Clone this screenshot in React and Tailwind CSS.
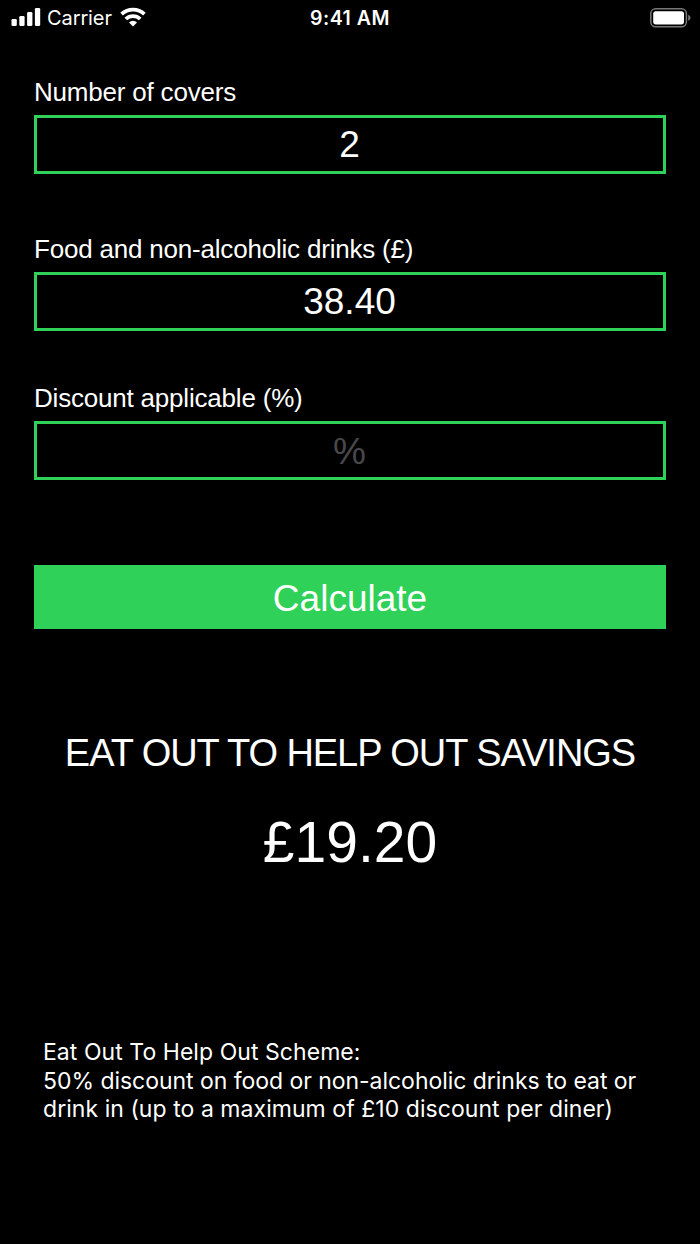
import React from 'react';

const fields = [
  { label: 'Number of covers', value: '2', spacing: 'mb-[59px]' },
  { label: 'Food and non-alcoholic drinks (£)', value: '38.40', spacing: 'mb-[51px]' },
  { label: 'Discount applicable (%)', value: '', placeholder: '%', spacing: 'mb-[85px]' },
];

function SignalIcon() {
  return (
    <svg width="30" height="20" viewBox="0 0 30 20" fill="white">
      <rect x="0.5" y="12" width="5.3" height="7" rx="1.3" />
      <rect x="8.3" y="9" width="5.3" height="10" rx="1.3" />
      <rect x="16.1" y="5" width="5.3" height="14" rx="1.3" />
      <rect x="23.9" y="1" width="5.3" height="18" rx="1.3" />
    </svg>
  );
}

function WifiIcon() {
  return (
    <svg width="26" height="20" viewBox="0 0 26 20" fill="none" stroke="white" strokeWidth="3.8">
      <path d="M1.6 7.1a16.6 16.6 0 0 1 22.8 0" />
      <path d="M5.8 12a10.4 10.4 0 0 1 14.4 0" />
      <path d="M13 19.4l-4-4a5.7 5.7 0 0 1 8 0z" fill="white" stroke="none" />
    </svg>
  );
}

function BatteryIcon() {
  return (
    <svg width="42" height="20" viewBox="0 0 42 20">
      <rect x="0.8" y="0.8" width="35.6" height="18" rx="4.8" fill="none" stroke="#777" strokeWidth="1.5" />
      <rect x="3.2" y="3.2" width="30.8" height="13.2" rx="2.6" fill="white" />
      <path d="M38.2 6.8c3 1 3 5 0 6z" fill="#777" />
    </svg>
  );
}

function StatusBar() {
  return (
    <header className="flex h-9 items-center justify-between pl-[11px] pr-[8px] font-['Inter',sans-serif]">
      <div className="flex flex-1 items-center">
        <div className="pb-[2px]"><SignalIcon /></div>
        <span className="ml-[6px] mr-[8px] text-[20px] tracking-[-0.1px]">Carrier</span>
        <div className="pb-[2px]"><WifiIcon /></div>
      </div>
      <div className="mr-[3px] pt-[2px] text-[19.5px] font-semibold tracking-[0.55px]">9:41 AM</div>
      <div className="flex flex-1 justify-end pb-[1px]">
        <BatteryIcon />
      </div>
    </header>
  );
}

export default function App() {
  return (
    <div className="h-[1244px] w-[700px] overflow-hidden bg-black font-['Liberation_Sans',sans-serif] text-white">
      <StatusBar />
      <main className="flex flex-col px-[34px] pt-[40px]">
        {fields.map((field) => (
          <div key={field.label} className={field.spacing}>
            <div className="mb-[7px] h-[32px] text-[26px] leading-[32px] tracking-[-0.2px] whitespace-nowrap">{field.label}</div>
            <div className="flex h-[59px] items-center justify-center border-[3px] border-[#30d158] pr-[1px] text-[37px]">
              {field.value || <span className="pt-[3px] text-[#48484a]">{field.placeholder}</span>}
            </div>
          </div>
        ))}
        <button className="h-[64px] bg-[#30d158] pt-[3px] text-[37px]">Calculate</button>
        <h1 className="mt-[101px] text-center text-[38px] leading-[46px] tracking-[-1.04px] whitespace-nowrap">EAT OUT TO HELP OUT SAVINGS</h1>
        <div className="mt-[33px] text-center text-[57px] leading-[66px]">£19.20</div>
        <p className="mt-[163px] pl-[9px] font-['Inter',sans-serif] text-[23px] leading-[28.5px] whitespace-nowrap">
          <span className="tracking-[0.05px]">Eat Out To Help Out Scheme:</span><br />
          <span className="tracking-[-0.04px]">50% discount on food or non-alcoholic drinks to eat or</span><br />
          <span className="tracking-[0.05px]">drink in (up to a maximum of £10 discount per diner)</span>
        </p>
      </main>
    </div>
  );
}
